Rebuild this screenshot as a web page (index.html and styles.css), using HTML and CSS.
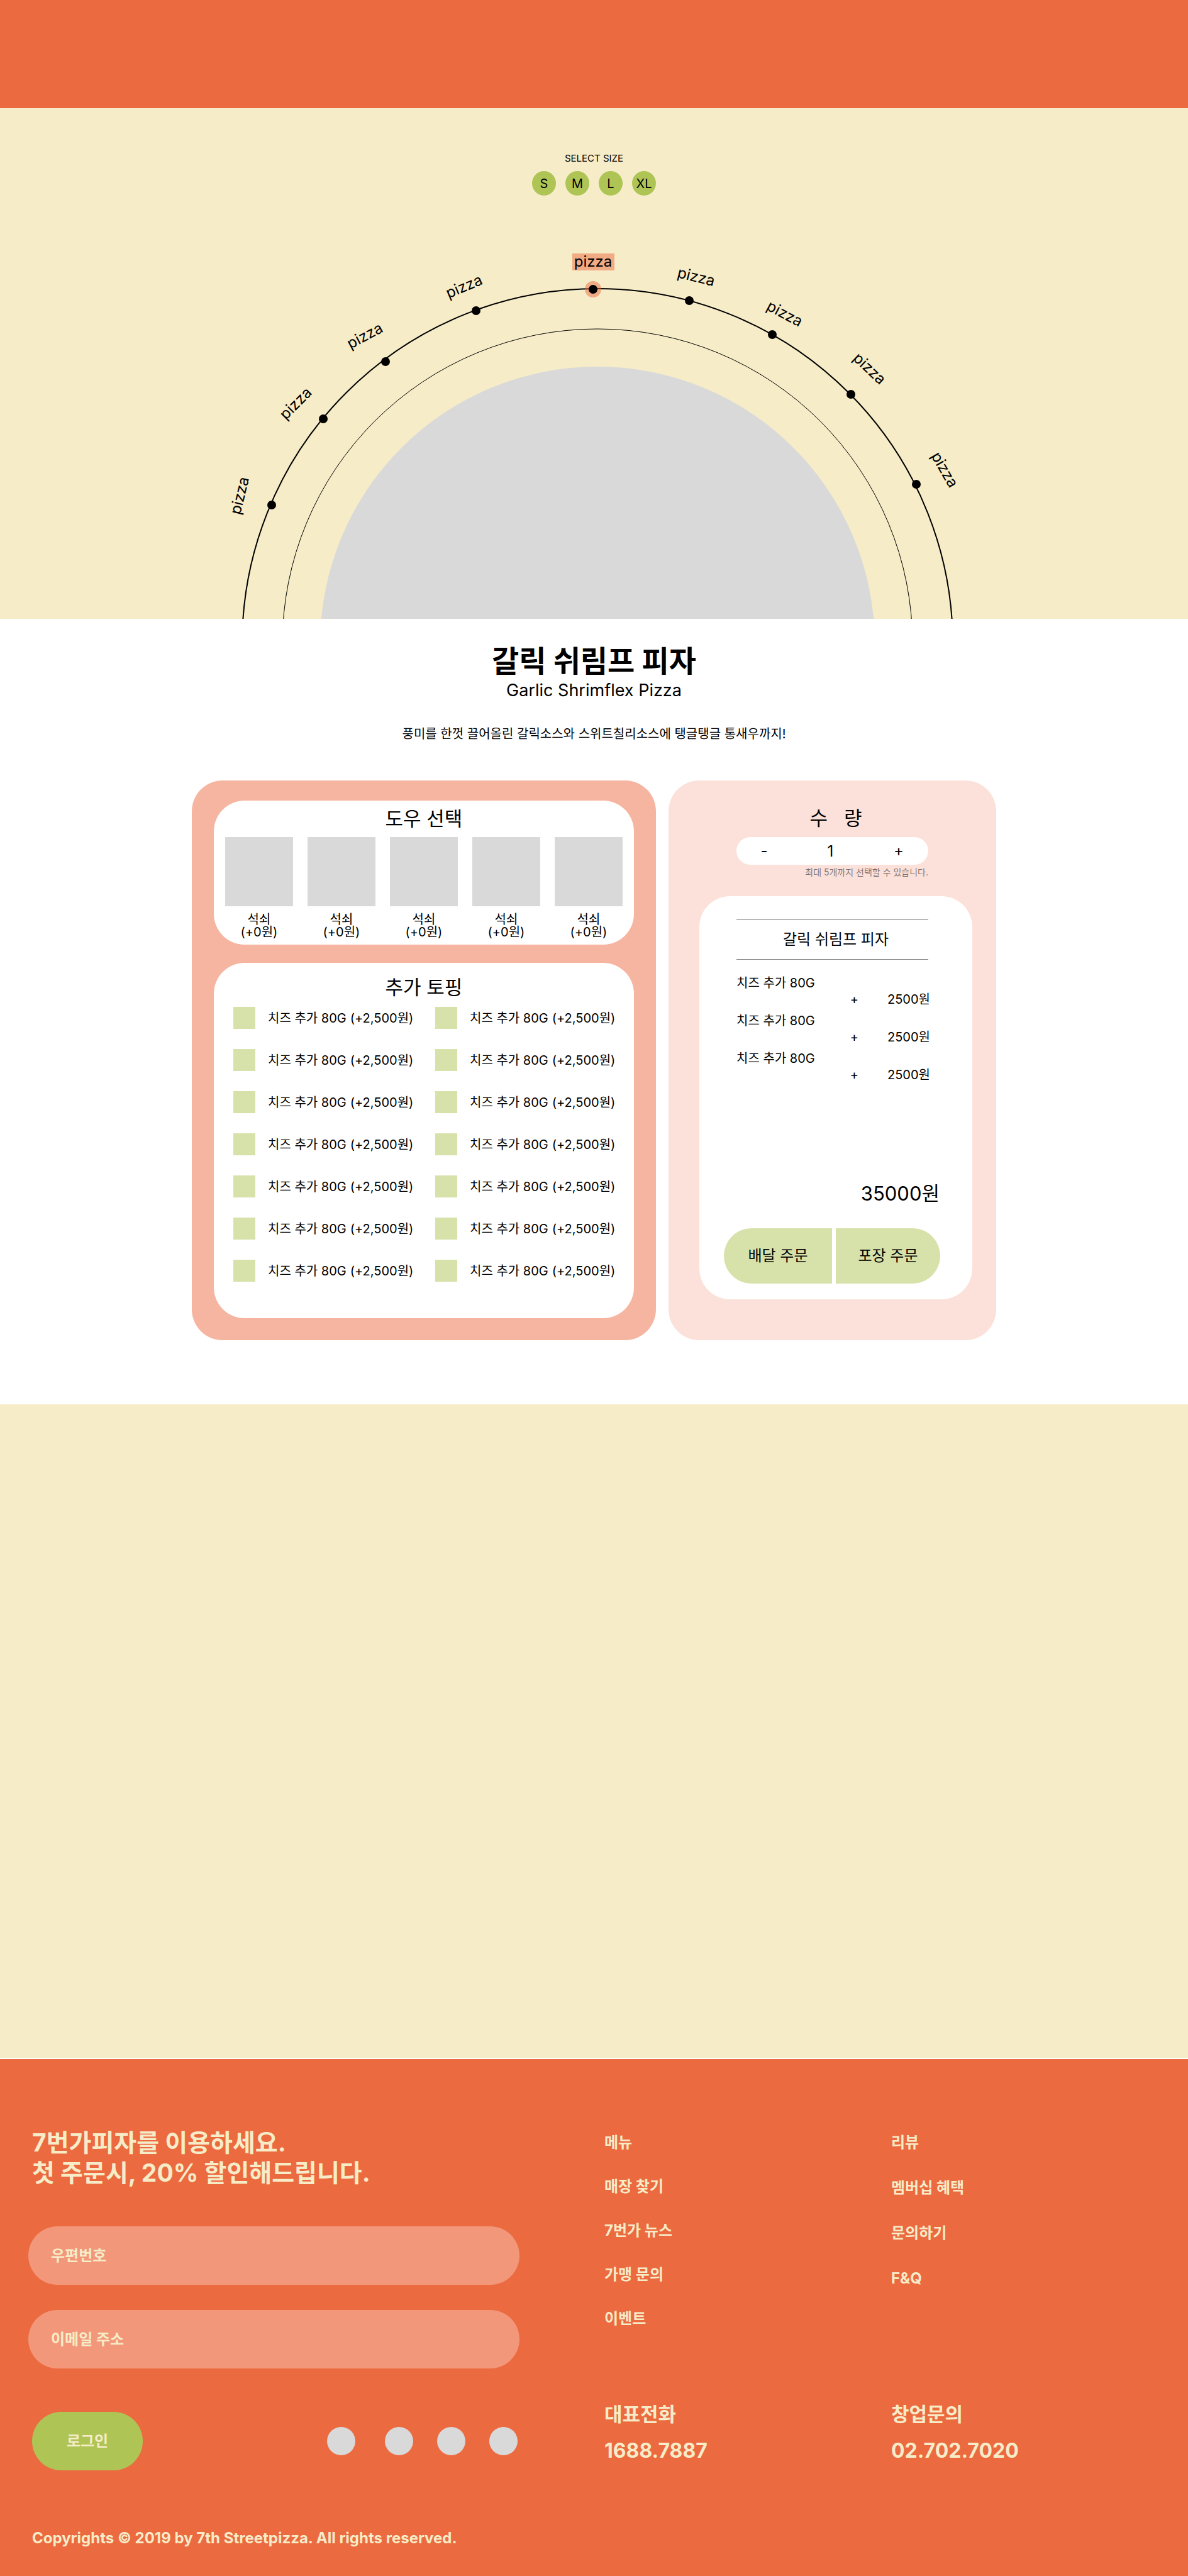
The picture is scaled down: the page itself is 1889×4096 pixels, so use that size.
FILE: index.html
```html
<!DOCTYPE html>
<html lang="ko">
<head>
<meta charset="utf-8">
<meta name="viewport" content="width=device-width, initial-scale=1">
<title>7번가피자 - 갈릭 쉬림프 피자</title>
<link rel="stylesheet" href="styles.css">
</head>
<body>
<header class="site-header"></header>

<main>
  <section class="hero" aria-label="피자 선택">
    <svg class="hero-dial" viewBox="0 0 1889 812" role="group" aria-label="pizza">
      <circle class="dial-plate" cx="950" cy="852" r="441"/>
      <circle class="dial-inner" cx="950" cy="852" r="501"/>
      <circle class="dial-outer" cx="950" cy="852" r="565"/>
      <circle class="dial-mark" cx="943" cy="288" r="13"/>
      <rect class="dial-mark" x="910" y="231" width="67" height="27"/>
      <g class="dial-dots">
        <circle cx="432" cy="631" r="7"/>
        <circle cx="514" cy="494" r="7"/>
        <circle cx="613" cy="403" r="7"/>
        <circle cx="757" cy="322" r="7"/>
        <circle cx="943" cy="288" r="7"/>
        <circle cx="1096" cy="306" r="7"/>
        <circle cx="1228" cy="360" r="7"/>
        <circle cx="1353" cy="455" r="7"/>
        <circle cx="1457" cy="598" r="7"/>
      </g>
      <g class="dial-labels">
        <a href="#pizza-1"><text transform="translate(389 618) rotate(-76)">pizza</text></a>
        <a href="#pizza-2"><text transform="translate(476 475) rotate(-45)">pizza</text></a>
        <a href="#pizza-3"><text transform="translate(584 369) rotate(-28)">pizza</text></a>
        <a href="#pizza-4"><text transform="translate(741 291) rotate(-23)">pizza</text></a>
        <a href="#pizza-5"><text transform="translate(943 252)">pizza</text></a>
        <a href="#pizza-6"><text transform="translate(1105 276) rotate(14)">pizza</text></a>
        <a href="#pizza-7"><text transform="translate(1244 334) rotate(28)">pizza</text></a>
        <a href="#pizza-8"><text transform="translate(1377 420) rotate(43)">pizza</text></a>
        <a href="#pizza-9"><text transform="translate(1495 579) rotate(60)">pizza</text></a>
      </g>
    </svg>
    <div class="size-picker">
      <p class="size-title">SELECT SIZE</p>
      <div class="size-list">
        <button class="size" type="button">S</button>
        <button class="size" type="button">M</button>
        <button class="size" type="button">L</button>
        <button class="size" type="button">XL</button>
      </div>
    </div>
  </section>

  <section class="product">
    <h1 class="product-name">갈릭 쉬림프 피자</h1>
    <p class="product-sub">Garlic Shrimflex Pizza</p>
    <p class="product-desc">풍미를 한껏 끌어올린 갈릭소스와 스위트칠리소스에 탱글탱글 통새우까지!</p>

    <div class="order">
      <div class="options">
        <section class="panel dough">
          <h2 class="panel-title">도우 선택</h2>
          <div class="dough-list">
            <button class="dough-item" type="button"><span class="dough-image"></span><span>석쇠<br>(+0원)</span></button>
            <button class="dough-item" type="button"><span class="dough-image"></span><span>석쇠<br>(+0원)</span></button>
            <button class="dough-item" type="button"><span class="dough-image"></span><span>석쇠<br>(+0원)</span></button>
            <button class="dough-item" type="button"><span class="dough-image"></span><span>석쇠<br>(+0원)</span></button>
            <button class="dough-item" type="button"><span class="dough-image"></span><span>석쇠<br>(+0원)</span></button>
          </div>
        </section>

        <section class="panel topping">
          <h2 class="panel-title">추가 토핑</h2>
          <div class="topping-list">
            <label class="topping-item"><input class="check" type="checkbox"><span>치즈 추가 80G</span> <span>(+2,500원)</span></label>
            <label class="topping-item"><input class="check" type="checkbox"><span>치즈 추가 80G</span> <span>(+2,500원)</span></label>
            <label class="topping-item"><input class="check" type="checkbox"><span>치즈 추가 80G</span> <span>(+2,500원)</span></label>
            <label class="topping-item"><input class="check" type="checkbox"><span>치즈 추가 80G</span> <span>(+2,500원)</span></label>
            <label class="topping-item"><input class="check" type="checkbox"><span>치즈 추가 80G</span> <span>(+2,500원)</span></label>
            <label class="topping-item"><input class="check" type="checkbox"><span>치즈 추가 80G</span> <span>(+2,500원)</span></label>
            <label class="topping-item"><input class="check" type="checkbox"><span>치즈 추가 80G</span> <span>(+2,500원)</span></label>
            <label class="topping-item"><input class="check" type="checkbox"><span>치즈 추가 80G</span> <span>(+2,500원)</span></label>
            <label class="topping-item"><input class="check" type="checkbox"><span>치즈 추가 80G</span> <span>(+2,500원)</span></label>
            <label class="topping-item"><input class="check" type="checkbox"><span>치즈 추가 80G</span> <span>(+2,500원)</span></label>
            <label class="topping-item"><input class="check" type="checkbox"><span>치즈 추가 80G</span> <span>(+2,500원)</span></label>
            <label class="topping-item"><input class="check" type="checkbox"><span>치즈 추가 80G</span> <span>(+2,500원)</span></label>
            <label class="topping-item"><input class="check" type="checkbox"><span>치즈 추가 80G</span> <span>(+2,500원)</span></label>
            <label class="topping-item"><input class="check" type="checkbox"><span>치즈 추가 80G</span> <span>(+2,500원)</span></label>
          </div>
        </section>
      </div>

      <aside class="summary">
        <h2 class="panel-title"><label for="qty">수&nbsp;&nbsp;&nbsp;량</label></h2>
        <div class="quantity">
          <div class="stepper">
            <button class="step" type="button">-</button>
            <input class="step-value" id="qty" type="text" inputmode="numeric" value="1">
            <button class="step" type="button">+</button>
          </div>
          <p class="quantity-note">최대 5개까지 선택할 수 있습니다.</p>
        </div>
        <section class="panel receipt">
          <hr class="rule">
          <h3 class="receipt-name">갈릭 쉬림프 피자</h3>
          <hr class="rule">
          <ul class="receipt-list">
            <li><p>치즈 추가 80G</p><p class="receipt-price"><span>+</span><span>2500원</span></p></li>
            <li><p>치즈 추가 80G</p><p class="receipt-price"><span>+</span><span>2500원</span></p></li>
            <li><p>치즈 추가 80G</p><p class="receipt-price"><span>+</span><span>2500원</span></p></li>
          </ul>
          <p class="total">35000원</p>
          <div class="order-buttons">
            <button class="order-button order-delivery" type="button">배달 주문</button>
            <button class="order-button order-pickup" type="button">포장 주문</button>
          </div>
        </section>
      </aside>
    </div>
  </section>

  <section class="showcase"></section>
</main>

<footer class="site-footer">
  <div class="footer-grid">
    <form class="signup" id="signup">
      <h2 class="signup-title">7번가피자를 이용하세요.<br>첫 주문시, 20% 할인해드립니다.</h2>
      <input class="field" type="text" placeholder="우편번호" aria-label="우편번호">
      <input class="field" type="email" placeholder="이메일 주소" aria-label="이메일 주소">
    </form>
    <nav class="footer-nav">
      <a href="#menu">메뉴</a>
      <a href="#stores">매장 찾기</a>
      <a href="#news">7번가 뉴스</a>
      <a href="#franchise">가맹 문의</a>
      <a href="#event">이벤트</a>
    </nav>
    <nav class="footer-nav footer-nav-support">
      <a href="#review">리뷰</a>
      <a href="#membership">멤버십 혜택</a>
      <a href="#contact">문의하기</a>
      <a href="#faq">F&amp;Q</a>
    </nav>
    <div class="actions">
      <button class="login" type="submit" form="signup">로그인</button>
      <ul class="social">
        <li><a href="#social-1" aria-label="SNS 1"></a></li>
        <li><a href="#social-2" aria-label="SNS 2"></a></li>
        <li><a href="#social-3" aria-label="SNS 3"></a></li>
        <li><a href="#social-4" aria-label="SNS 4"></a></li>
      </ul>
    </div>
    <div class="phone">
      <p>대표전화</p>
      <a class="phone-number" href="tel:16887887">1688.7887</a>
    </div>
    <div class="phone">
      <p>창업문의</p>
      <a class="phone-number" href="tel:027027020">02.702.7020</a>
    </div>
  </div>
  <p class="copyright">Copyrights © 2019 by 7th Streetpizza. All rights reserved.</p>
</footer>
</body>
</html>
```
FILE: styles.css
```css
:root {
  --orange: #ec6a40;
  --salmon: #f6b5a0;
  --pink: #fbe1d9;
  --cream: #f6ecc8;
  --green: #aec555;
  --green-light: #d7e2aa;
  --gray: #d9d9d9;
  --radius: 49px;
}

* {
  box-sizing: border-box;
}

body,
h1, h2, h3, p, ul, hr {
  margin: 0;
  padding: 0;
}

body {
  background: #fff;
  color: #000;
  font-family: Inter, "Noto Sans CJK KR", sans-serif;
  font-size: 20px;
  line-height: 20px;
}

h1, h2, h3 {
  font-weight: 400;
}

ul {
  list-style: none;
}

a {
  color: inherit;
  text-decoration: none;
}

button,
input {
  margin: 0;
  padding: 0;
  border: 0;
  background: none;
  color: inherit;
  font: inherit;
}

button {
  cursor: pointer;
}

.site-header {
  height: 172px;
  background: var(--orange);
}

/* Hero dial */

.hero {
  display: grid;
  background: var(--cream);
}

.hero-dial,
.size-picker {
  grid-area: 1 / 1;
}

.hero-dial {
  display: block;
  width: 100%;
}

.dial-plate {
  fill: var(--gray);
}

.dial-inner,
.dial-outer {
  fill: none;
  stroke: #000;
}

.dial-inner {
  stroke-width: 1;
}

.dial-outer {
  stroke-width: 2;
}

.dial-mark {
  fill: var(--orange);
  fill-opacity: 0.5;
}

.dial-labels {
  font-size: 24px;
  text-anchor: middle;
}

.size-picker {
  justify-self: center;
  align-self: start;
  padding-top: 70px;
  text-align: center;
}

.size-title {
  font-size: 15px;
}

.size-list {
  display: flex;
  gap: 15px;
  margin-top: 10px;
}

.size {
  width: 38px;
  height: 39px;
  border-radius: 50%;
  background: var(--green);
}

/* Product */

.product {
  padding: 39px 40px 102px;
  text-align: center;
}

.product-name {
  font-size: 47px;
  line-height: 56px;
  font-weight: 700;
}

.product-sub {
  font-size: 27px;
  line-height: 38px;
}

.product-desc {
  margin-top: 40px;
}

.order {
  display: grid;
  grid-template-columns: minmax(0, 738fr) minmax(0, 521fr);
  gap: 20px;
  max-width: 1279px;
  margin: 64px auto 0;
}

.options {
  display: flex;
  flex-direction: column;
  gap: 29px;
  padding: 32px 35px 35px;
  border-radius: var(--radius);
  background: var(--salmon);
}

.panel {
  border-radius: var(--radius);
  background: #fff;
}

.panel-title {
  font-size: 31px;
  line-height: 38px;
}

.dough {
  padding: 10px 18px;
}

.dough-list {
  display: grid;
  grid-template-columns: repeat(5, 1fr);
  gap: 23px;
  margin-top: 10px;
}

.dough-image {
  display: block;
  height: 110px;
  margin-bottom: 11px;
  background: var(--gray);
}

.topping {
  padding: 20px 31px 58px;
}

.topping-list {
  display: grid;
  grid-template-columns: repeat(2, minmax(0, 1fr));
  gap: 32px 36px;
  margin-top: 12px;
}

.topping-item {
  display: flex;
  align-items: center;
  gap: 6px;
  white-space: nowrap;
}

.check {
  appearance: none;
  flex: none;
  width: 35px;
  height: 35px;
  margin-right: 14px;
  background: var(--green-light);
}

.check:checked {
  background: var(--green);
}

/* Summary */

.summary {
  display: flex;
  flex-direction: column;
  padding: 41px 38px 65px 49px;
  border-radius: var(--radius);
  background: var(--pink);
}

.quantity {
  margin: 11px 70px 28px 59px;
}

.stepper {
  display: grid;
  grid-template-columns: 88px 1fr 94px;
  height: 44px;
  border-radius: 22px;
  background: #fff;
  font-size: 24px;
}

.step-value {
  min-width: 0;
  text-align: center;
}

.quantity-note {
  margin-top: 2px;
  color: rgba(0, 0, 0, 0.5);
  font-size: 14px;
  text-align: right;
}

.receipt {
  display: flex;
  flex: 1;
  flex-direction: column;
  padding: 37px 0 25px;
}

.rule {
  margin: 0 70px 0 59px;
  border: 0;
  border-top: 1px solid #808080;
}

.receipt-name {
  font-size: 24px;
  line-height: 62px;
}

.receipt-list {
  display: grid;
  gap: 8px;
  padding: 24px 67px 0 59px;
  line-height: 26px;
  text-align: left;
}

.receipt-price {
  display: flex;
  justify-content: flex-end;
  gap: 46px;
}

.total {
  margin-top: auto;
  padding-right: 52px;
  font-size: 31px;
  line-height: 38px;
  text-align: right;
}

.order-buttons {
  display: grid;
  grid-template-columns: 172fr 166fr;
  gap: 6px;
  margin: 36px 51px 0 39px;
}

.order-button {
  height: 88px;
  background: var(--green-light);
  font-size: 24px;
}

.order-delivery {
  border-radius: 44px 0 0 44px;
}

.order-pickup {
  border-radius: 0 44px 44px 0;
}

.showcase {
  min-height: 1039px;
  background: var(--cream);
}

/* Footer */

.site-footer {
  margin-top: 2px;
  padding: 109px 0 46px 45px;
  background: var(--orange);
  color: var(--cream);
  font-size: 24px;
  font-weight: 700;
}

.footer-grid {
  display: grid;
  grid-template-columns: 916fr 456fr 472fr;
  row-gap: 54px;
}

.signup {
  display: flex;
  flex-direction: column;
  gap: 40px;
  margin-right: 135px;
}

.signup-title {
  margin-bottom: 21px;
  padding-left: 6px;
  font-size: 39px;
  font-weight: 700;
  line-height: 48px;
}

.field {
  height: 93px;
  padding: 0 36px;
  border-radius: 47px;
  background: rgba(255, 255, 255, 0.3);
}

.field::placeholder {
  color: inherit;
  opacity: 1;
}

.footer-nav {
  display: flex;
  flex-direction: column;
  align-items: flex-start;
  gap: 22px;
  line-height: 48px;
}

.footer-nav-support {
  gap: 24px;
}

.actions {
  display: flex;
  align-items: center;
  justify-content: space-between;
  margin: 15px 138px 0 6px;
}

.login {
  width: 176px;
  height: 93px;
  border-radius: 47px;
  background: var(--green);
}

.social {
  display: flex;
  gap: 38px;
}

.social li:first-child {
  margin-right: 9px;
}

.social a {
  display: block;
  width: 45px;
  height: 45px;
  border-radius: 50%;
  background: var(--gray);
}

.phone {
  display: flex;
  flex-direction: column;
  gap: 20px;
  font-size: 31px;
  line-height: 38px;
}

.phone-number {
  font-size: 32px;
}

.copyright {
  margin-top: 93px;
  padding-left: 6px;
  line-height: 29px;
}
```
